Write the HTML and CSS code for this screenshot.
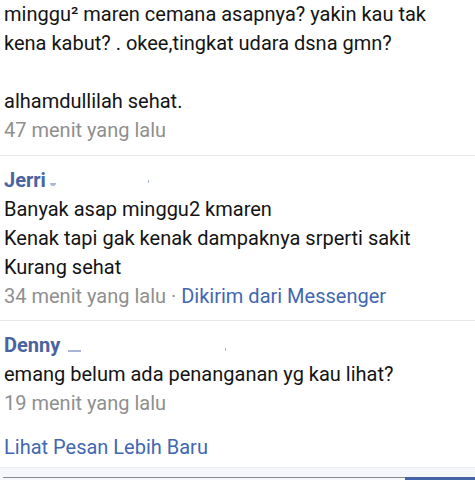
FILE: index.html
```html
<!DOCTYPE html>
<html>
<head>
<meta charset="utf-8">
<link rel="stylesheet" href="styles.css">
</head>
<body>
<div class="thread">
  <div class="msg first">
    <div class="body">minggu² maren cemana asapnya? yakin kau tak<br>kena kabut? . okee,tingkat udara dsna gmn?<br>&nbsp;<br>alhamdullilah sehat.</div>
    <div class="meta">47 menit yang lalu</div>
  </div>
  <div class="msg">
    <div class="name">Jerri<span class="blur b1"></span><span class="blur tick t1"></span></div>
    <div class="body">Banyak asap minggu2 kmaren<br>Kenak tapi gak kenak dampaknya srperti sakit<br>Kurang sehat</div>
    <div class="meta">34 menit yang lalu · <span class="link">Dikirim dari Messenger</span></div>
  </div>
  <div class="msg last">
    <div class="name">Denny<span class="blur b2"></span><span class="blur tick t2"></span></div>
    <div class="body">emang belum ada penanganan yg kau lihat?</div>
    <div class="meta">19 menit yang lalu</div>
  </div>
  <div class="more"><span class="link">Lihat Pesan Lebih Baru</span></div>
</div>
<div class="footer">
  <div class="bar"><span class="grey"></span><span class="blue"></span></div>
</div>
</body>
</html>
```
FILE: styles.css
```css
html, body {
  margin: 0;
  padding: 0;
  background: #ffffff;
}
body {
  width: 475px;
  height: 480px;
  overflow: hidden;
  font-family: Roboto, "Noto Sans", sans-serif;
  font-size: 20px;
  line-height: 29px;
  color: #141414;
}
.thread {
  display: flex;
  flex-direction: column;
}
.msg {
  padding: 10px 4px 9px;
  border-bottom: 1px solid #e6e6e6;
}
.msg.first {
  padding-top: 0;
  padding-bottom: 10px;
}
.msg.last {
  border-bottom: none;
  padding-bottom: 0;
}
.name {
  font-weight: bold;
  color: #4a64a0;
  display: flex;
  align-items: center;
}
.blur {
  display: inline-block;
  background: #6d86bb;
  opacity: 0.6;
}
.b1 {
  width: 6px;
  height: 3px;
  margin-left: 4px;
  margin-top: 8px;
  border-radius: 0 0 3px 3px;
}
.b2 {
  width: 13px;
  height: 2px;
  margin-left: 8px;
  margin-top: 10px;
}
.tick {
  width: 1px;
  height: 3px;
}
.t1 {
  margin-left: 92px;
  margin-top: 2px;
}
.t2 {
  margin-left: 144px;
  margin-top: 8px;
}
.meta {
  color: #8f8f8f;
}
.link {
  color: #4267b2;
}
.more {
  padding: 15px 4px 5px;
}
.footer {
  height: 13px;
  background: #f6f7fc;
  border-top: 1px solid #eeeef2;
  display: flex;
  flex-direction: column;
  justify-content: flex-end;
}
.bar {
  display: flex;
  align-items: flex-start;
  height: 4px;
}
.grey {
  margin-left: 3px;
  width: 402px;
  height: 1px;
  background: #8a8a8a;
}
.blue {
  flex: 1;
  height: 4px;
  background: #4464a6;
}
```
